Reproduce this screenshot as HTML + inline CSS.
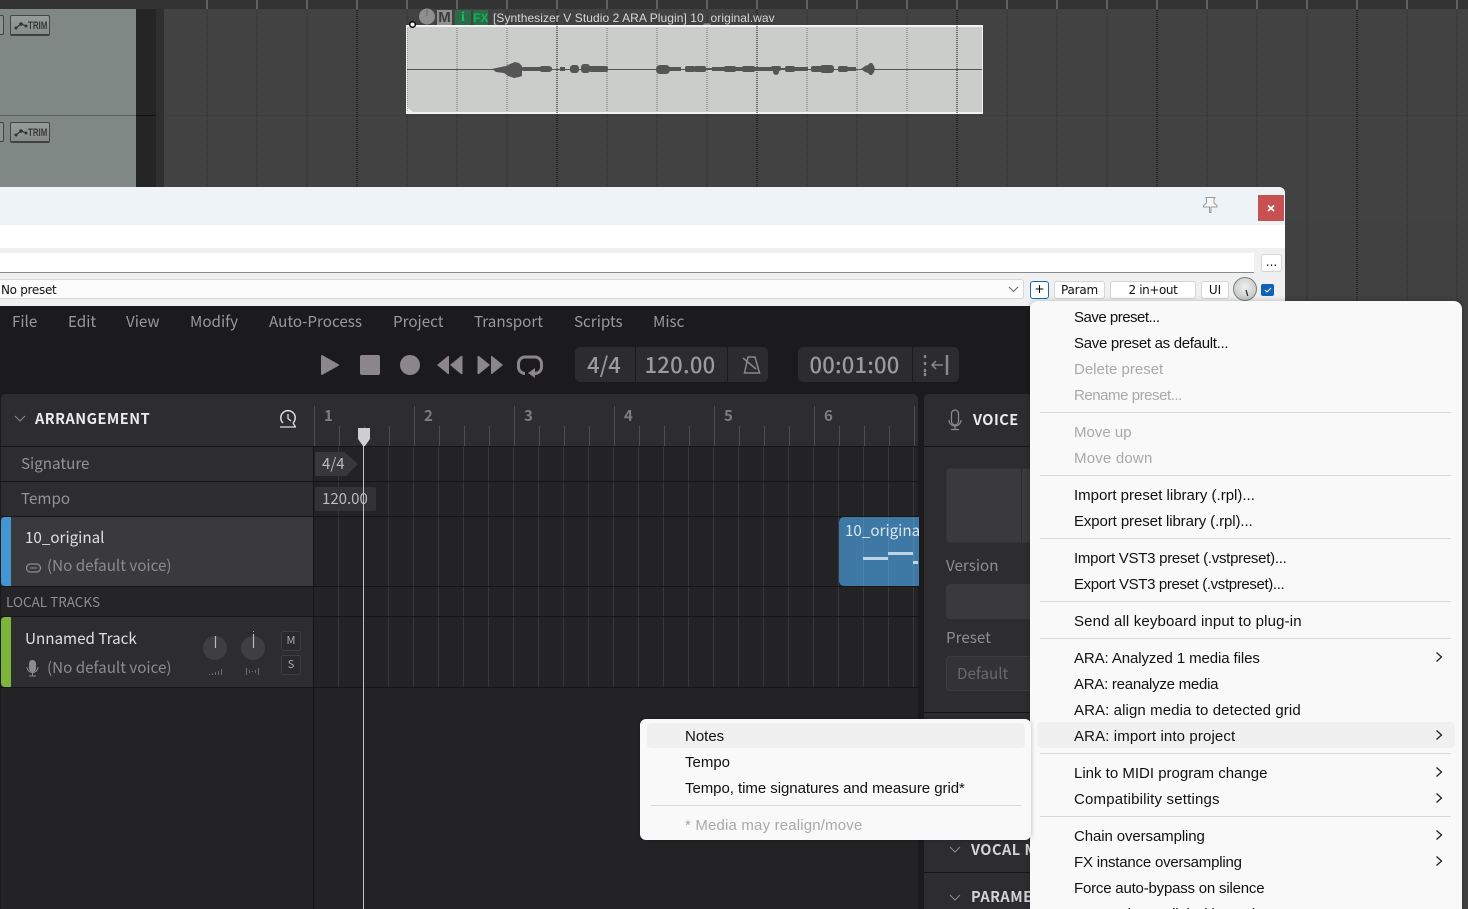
<!DOCTYPE html>
<html><head><meta charset="utf-8"><style>
html,body{margin:0;padding:0;width:1468px;height:909px;overflow:hidden;background:#424242}
div{position:absolute;box-sizing:border-box}
#root{left:0;top:0;width:1468px;height:909px;overflow:hidden;background:#424242}
.t{white-space:nowrap;line-height:20px;height:20px;font-family:"Noto Sans CJK JP","Liberation Sans",sans-serif}
.d{font-size:15.2px;color:#9a989c}
.m{font-family:"Liberation Sans","Noto Sans CJK JP",sans-serif;font-size:15px;color:#111;left:1074px}
.g{color:#a9a9a9}
.s{left:1040px;width:411px;height:1px;background:#d9d9d9}
.b{background:#fff;border:1px solid #d5d5d5;border-radius:3px;height:18px;font:12px/16px "DejaVu Sans",sans-serif;color:#111;text-align:center}
svg{position:absolute;left:0;top:0;overflow:visible}
.r{height:1px;background:#151517}
</style></head><body><div id="root">

<svg width="1468" height="909">
<defs>
<pattern id="dots" width="50" height="2" patternUnits="userSpaceOnUse" x="6.5"><rect x="0" y="0" width="1" height="1" fill="#2c2c2c"/></pattern>
<pattern id="dots3" width="50" height="2" patternUnits="userSpaceOnUse" x="6.5"><rect x="0" y="0" width="1" height="1" fill="#777"/></pattern>
<pattern id="dots2" width="200" height="2" patternUnits="userSpaceOnUse" x="156.5"><rect x="0" y="0" width="1" height="1" fill="#0c0c0c"/></pattern>
<pattern id="tk" width="50" height="9" patternUnits="userSpaceOnUse" x="6.5"><rect x="0" y="0" width="1" height="9" fill="#8f8f8f"/></pattern>
</defs>
<rect x="0" y="0" width="1468" height="9" fill="#333"/>
<rect x="164" y="0" width="1304" height="9" fill="url(#tk)"/>
<rect x="0" y="9" width="1468" height="300" fill="#424242"/>
<rect x="0" y="222" width="1468" height="90" fill="#414141"/>
<rect x="0" y="9" width="136" height="178" fill="#808886"/>
<rect x="136" y="9" width="20" height="178" fill="#252525"/>
<rect x="156" y="9" width="8" height="178" fill="#2f2f2f"/>
<rect x="0" y="115" width="136" height="1" fill="#585f5d"/>
<rect x="136" y="115" width="20" height="1" fill="#111"/>
<rect x="164" y="115" width="1304" height="1" fill="#3e3e3e"/>
<rect x="164" y="9" width="1304" height="300" fill="url(#dots)"/>
<rect x="406" y="25" width="577" height="89" fill="#cbcdcb"/>
<rect x="406" y="25" width="577" height="2" fill="#f2f2f2"/>
<rect x="406" y="112" width="577" height="2" fill="#f2f2f2"/>
<rect x="406" y="25" width="1" height="89" fill="#f2f2f2"/>
<rect x="982" y="25" width="1" height="89" fill="#f2f2f2"/>
<path d="M407 107l7 6h-7z" fill="#eee"/>
<rect x="407" y="27" width="575" height="85" fill="url(#dots3)"/>
<rect x="164" y="9" width="1304" height="300" fill="url(#dots2)"/>
<rect x="407" y="69" width="575" height="1" fill="#555"/>
<g fill="#555">
<path d="M492 69l4-1 10-2 4-2 5-2 4 1 3 3v10l-3 1-5 1-6-2-4-3-8-1z"/>
<rect x="522" y="67" width="30" height="4" rx="1"/><rect x="540" y="66" width="11" height="6" rx="2"/>
<rect x="560" y="67" width="5" height="4"/>
<rect x="570" y="65" width="9" height="8" rx="3"/><rect x="581" y="64" width="9" height="9" rx="3"/><rect x="589" y="66" width="19" height="6" rx="2"/>
<rect x="656" y="65" width="14" height="9" rx="4"/><rect x="668" y="67" width="13" height="4"/>
<rect x="685" y="66" width="10" height="6" rx="2"/><rect x="694" y="66" width="12" height="6" rx="2"/><rect x="705" y="68" width="8" height="2"/>
<rect x="712" y="67" width="14" height="4"/><rect x="724" y="66" width="12" height="6" rx="2"/><rect x="735" y="67" width="8" height="4"/>
<rect x="742" y="66" width="13" height="6" rx="2"/><rect x="754" y="67" width="18" height="4"/>
<rect x="771" y="66" width="10" height="5" rx="2"/><rect x="773" y="66" width="6" height="9" rx="3"/>
<rect x="781" y="68" width="5" height="2"/><rect x="785" y="66" width="10" height="6" rx="2"/><rect x="794" y="67" width="14" height="4"/>
<rect x="811" y="66" width="12" height="6" rx="2"/><rect x="820" y="65" width="14" height="8" rx="3"/>
<rect x="838" y="66" width="10" height="6" rx="2"/><rect x="847" y="67" width="9" height="4"/>
<path d="M861 69l4-3 3-1 2-2 2 0 2 3 1 3-1 3-2 3-2 0-2-2-3-1z"/>
</g>
<circle cx="412.500" cy="24.500" r="2.800" fill="#fff" stroke="#000" stroke-width="1.500"/>
<circle cx="427" cy="16.500" r="8" fill="#8e8e8e"/><rect x="426.500" y="10" width="1" height="6" fill="#6a6a6a"/>
<rect x="437" y="10" width="15" height="15" fill="#8f8f8f"/>
<rect x="455" y="10" width="16" height="15" fill="#2d6b48"/>
<rect x="473" y="10" width="15" height="15" fill="#2d6b48"/>
</svg>
<div class="t" style="left:437px;top:8px;width:15px;text-align:center;font:bold 15px/20px 'Liberation Sans';color:#3c3c3c">M</div>
<div class="t" style="left:455px;top:8px;width:16px;text-align:center;font:bold 14px/20px 'Liberation Serif';color:#17c060">i</div>
<div class="t" style="left:473px;top:8px;width:15px;text-align:center;font:bold 12px/20px 'Liberation Sans';color:#0fb45a">FX</div>
<div class="t" style="left:493px;top:8px;font:12px/20px 'Liberation Sans';color:#d8d8d8;letter-spacing:.07px">[Synthesizer V Studio 2 ARA Plugin] 10_original.wav</div>

<div style="left:-8px;top:15px;width:12px;height:20px;background:#8b9290;border:1px solid #444;border-radius:2px"></div>
<div style="left:10px;top:15px;width:40px;height:21px;background:linear-gradient(#969d9b,#858c8a);border:1px solid #444;border-bottom:2px solid #3f4241;border-radius:2px"></div>
<div class="t" style="left:28px;top:16px;font:bold 11px/20px 'Liberation Sans';color:#3a3a3a;transform:scaleX(.72);transform-origin:left">TRIM</div>
<div style="left:-8px;top:122px;width:12px;height:20px;background:#8b9290;border:1px solid #444;border-radius:2px"></div>
<div style="left:10px;top:122px;width:40px;height:21px;background:linear-gradient(#969d9b,#858c8a);border:1px solid #444;border-bottom:2px solid #3f4241;border-radius:2px"></div>
<div class="t" style="left:28px;top:123px;font:bold 11px/20px 'Liberation Sans';color:#3a3a3a;transform:scaleX(.72);transform-origin:left">TRIM</div>
<svg width="60" height="150"><path d="M16 28l5-4 5 2M16 135l5-4 5 2" fill="none" stroke="#333" stroke-width="1.200"/><circle cx="16" cy="28" r="1.500" fill="#333"/><circle cx="21" cy="24" r="1.800" fill="#333"/><circle cx="26" cy="26" r="1.500" fill="#333"/><circle cx="16" cy="135" r="1.500" fill="#333"/><circle cx="21" cy="131" r="1.800" fill="#333"/><circle cx="26" cy="133" r="1.500" fill="#333"/></svg>

<!-- plugin window -->
<div style="left:0;top:187px;width:1285px;height:125px;background:#f0f0f0;border-top-right-radius:6px;overflow:hidden">
  <div style="left:0;top:0;width:1285px;height:38px;background:#eef3f8"></div>
  <div style="left:0;top:38px;width:1285px;height:23px;background:#fff"></div>
  <div style="left:1258px;top:8px;width:26px;height:26px;background:#c75050"></div>
</div>
<svg width="1468" height="310"><path d="M1268 205.500l6 5.500m0-5.500l-6 5.500" stroke="#fff" stroke-width="1.700"/><path d="M1206 197.500h9l-1 1.500v4l3 2.500v1.500h-6v5.500h-1.500v-5.500h-6v-1.500l3-2.500v-4z" fill="#f6f6f6" stroke="#9a9a9a" stroke-width="1"/></svg>
<div style="left:0;top:253px;width:1254px;height:20px;background:#fff;border-bottom:1px solid #8a8a8a"></div>
<div class="b" style="left:1261px;top:254px;width:21px;height:18px;line-height:15px">...</div>
<div style="left:0;top:279px;width:1024px;height:20px;background:#fcfcfc;border:1px solid #d8d8d8;border-left:0;border-radius:0 3px 3px 0"></div>
<div class="t" style="left:1px;top:280px;font:12px/20px 'DejaVu Sans';color:#111;letter-spacing:-.3px">No preset</div>
<svg width="1468" height="310"><path d="M1009 287l4.500 4.500 4.500-4.500" fill="none" stroke="#666" stroke-width="1"/></svg>
<div class="b" style="left:1030px;top:281px;width:19px;border:1px solid #0f6cbd;color:#000;line-height:15px">+</div>
<div class="b" style="left:1054px;top:281px;width:51px;letter-spacing:-.2px">Param</div>
<div class="b" style="left:1110px;top:281px;width:86px;letter-spacing:-.4px">2 in+out</div>
<div class="b" style="left:1201px;top:281px;width:28px">UI</div>
<div style="left:1233px;top:277px;width:24px;height:24px;border-radius:50%;background:radial-gradient(circle at 50% 40%,#f0f2f0,#b6bab8);border:1px solid #7c7c7c"></div>
<svg width="1468" height="310"><path d="M1246 290l1.800 6" stroke="#222" stroke-width="1.200"/></svg>
<div style="left:1261px;top:284px;width:13px;height:12px;background:#0f62b8;border-radius:2px"></div>
<svg width="1468" height="310"><path d="M1265 290l2 2 4-4" stroke="#fff" fill="none" stroke-width="1"/></svg>

<!-- dark app -->
<div style="left:0;top:306px;width:1030px;height:603px;background:#1b1b1d"></div>
<div class="t d" style="left:12px;top:311px">File</div>
<div class="t d" style="left:68px;top:311px">Edit</div>
<div class="t d" style="left:126px;top:311px">View</div>
<div class="t d" style="left:190px;top:311px">Modify</div>
<div class="t d" style="left:269px;top:311px">Auto-Process</div>
<div class="t d" style="left:393px;top:311px">Project</div>
<div class="t d" style="left:474px;top:311px">Transport</div>
<div class="t d" style="left:574px;top:311px">Scripts</div>
<div class="t d" style="left:653px;top:311px">Misc</div>

<svg width="1030" height="400">
<g fill="#8a868c">
<path d="M321 356q0-1.500 1.500-.8l16 9q1.200.8 0 1.600l-16 9q-1.500.7-1.500-.8z"/>
<rect x="360" y="355" width="20" height="20" rx="2"/>
<circle cx="410" cy="365" r="10"/>
<path d="M437 365l11-9q1-.5 1 .5v17q0 1-1 .5zM450 365l11-9q1.500-.5 1.500.5v17q0 1-1.500.5z"/>
<path d="M503 365l-11-9q-1-.5-1 .5v17q0 1 1 .5zM490 365l-11-9q-1.500-.5-1.500.5v17q0 1 1.500.5z"/>
</g>
<path d="M534 373.500h1a6.500 6.500 0 0 0 6.500-6.500v-3.500a6.500 6.500 0 0 0-6.500-6.500h-10a6.500 6.500 0 0 0-6.500 6.500v3.500a6.500 6.500 0 0 0 6.500 6.500" fill="none" stroke="#8a868c" stroke-width="3"/>
<path d="M535 368v10l-7-5z" fill="#8a868c"/>
</svg>
<div style="left:575px;top:347px;width:193px;height:35px;background:#2c2b2e;border-radius:5px"></div>
<div style="left:635px;top:347px;width:1px;height:35px;background:#1b1b1d"></div>
<div style="left:727px;top:347px;width:1px;height:35px;background:#1b1b1d"></div>
<div style="left:798px;top:347px;width:161px;height:35px;background:#2c2b2e;border-radius:5px"></div>
<div style="left:912px;top:347px;width:1px;height:35px;background:#1b1b1d"></div>
<div class="t" style="left:576px;top:354px;width:56px;text-align:center;font-size:22px;font-weight:500;color:#9c9a9e">4/4</div>
<div class="t" style="left:636px;top:354px;width:88px;text-align:center;font-size:22px;font-weight:500;color:#9c9a9e;letter-spacing:.3px">120.00</div>
<div class="t" style="left:798px;top:354px;width:113px;text-align:center;font-size:22px;font-weight:500;color:#9c9a9e;letter-spacing:.2px">00:01:00</div>
<svg width="1030" height="400" fill="none" stroke="#8a868c">
<path d="M748 357h7l4.500 16h-15zM743 358l13 11" stroke-width="1.500"/>
<path d="M925 356v1m0 6v1m0 6v1m0 3v1" stroke-width="2.500" stroke-linecap="round"/>
<path d="M943 365h-11m4-4l-4 4 4 4" stroke-width="1.500"/>
<path d="M947 355v20" stroke-width="2.500"/>
</svg>

<!-- arrangement -->
<div style="left:1px;top:394px;width:917px;height:515px;background:#232325;border-radius:5px 5px 0 0;overflow:hidden">
  <div style="left:0;top:0;width:917px;height:52px;background:#2d2c2f"></div>
  <div style="left:0;top:53px;width:312px;height:34px;background:#2d2c2f"></div>
  <div style="left:0;top:88px;width:312px;height:34px;background:#2d2c2f"></div>
  <div style="left:0;top:123px;width:312px;height:69px;background:#3a393d"></div>
  <div style="left:0;top:193px;width:312px;height:29px;background:#252427"></div>
  <div style="left:0;top:223px;width:312px;height:70px;background:#2d2c2f"></div>
  <div style="left:0;top:294px;width:312px;height:221px;background:#232325"></div>
</div>
<div style="left:313px;top:446px;width:1px;height:463px;background:#141416"></div>
<svg width="1030" height="909">
<g stroke="#38383a" stroke-width="1">
<path d="M338.500 447V687M363.500 447V687M388.500 447V687M413.500 447V687M438.500 447V687M463.500 447V687M488.500 447V687M513.500 447V687M538.500 447V687M563.500 447V687M588.500 447V687M613.500 447V687M638.500 447V687M663.500 447V687M688.500 447V687M713.500 447V687M738.500 447V687M763.500 447V687M788.500 447V687M813.500 447V687M838.500 447V687M863.500 447V687M888.500 447V687M913.500 447V687"/>
</g>
<g stroke="#4d4c50" stroke-width="1">
<path d="M314.500 406V446M414.500 406V446M514.500 406V446M614.500 406V446M714.500 406V446M814.500 406V446M914.500 406V446"/>
<path d="M339.500 426V446M364.500 426V446M389.500 426V446M439.500 426V446M464.500 426V446M489.500 426V446M539.500 426V446M564.500 426V446M589.500 426V446M639.500 426V446M664.500 426V446M689.500 426V446M739.500 426V446M764.500 426V446M789.500 426V446M839.500 426V446M864.500 426V446M889.500 426V446"/>
</g>
</svg>
<div class="r" style="left:0;top:446px;width:918px"></div>
<div class="r" style="left:0;top:481px;width:918px"></div>
<div class="r" style="left:0;top:516px;width:918px"></div>
<div class="r" style="left:0;top:586px;width:918px"></div>
<div class="r" style="left:0;top:616px;width:918px"></div>
<div class="r" style="left:0;top:687px;width:918px"></div>

<div class="t" style="left:324px;top:406px;font-size:15px;font-weight:700;color:#7f7d82">1</div>
<div class="t" style="left:424px;top:406px;font-size:15px;font-weight:700;color:#7f7d82">2</div>
<div class="t" style="left:524px;top:406px;font-size:15px;font-weight:700;color:#7f7d82">3</div>
<div class="t" style="left:624px;top:406px;font-size:15px;font-weight:700;color:#7f7d82">4</div>
<div class="t" style="left:724px;top:406px;font-size:15px;font-weight:700;color:#7f7d82">5</div>
<div class="t" style="left:824px;top:406px;font-size:15px;font-weight:700;color:#7f7d82">6</div>

<svg width="1030" height="909" fill="none">
<path d="M15 416l5 5 5-5" stroke="#8d8b90" stroke-width="1"/>
<path d="M283 423a7.200 7.200 0 1 1 10 0" stroke="#ddd" stroke-width="1.500"/>
<path d="M288 414v4.500l3 2.500M280 427h16M293 423l2.500 4" stroke="#ddd" stroke-width="1.300"/>
<path d="M315 452h29l14 12-12 12h-31z" fill="#38373a"/>
<rect x="315" y="487" width="61" height="24" rx="2" fill="#333235"/>
</svg>
<div class="t" style="left:35px;top:409px;font-size:14.500px;font-weight:700;color:#eceaee;letter-spacing:.5px">ARRANGEMENT</div>
<div class="t" style="left:21px;top:453px;color:#959398;font-size:15.200px">Signature</div>
<div class="t" style="left:21px;top:488px;color:#959398;font-size:15.200px">Tempo</div>
<div class="t" style="left:322px;top:454px;color:#bdbbc0;font-size:15px">4/4</div>
<div class="t" style="left:322px;top:489px;color:#bdbbc0;font-size:15px">120.00</div>

<div style="left:1px;top:517px;width:10px;height:69px;background:#4396d2;border-radius:4px 0 0 4px"></div>
<div style="left:1px;top:617px;width:10px;height:70px;background:#7cb53a;border-radius:4px 0 0 4px"></div>
<div class="t" style="left:25px;top:527px;color:#e0dee2;font-size:15.200px">10_original</div>
<div class="t" style="left:47px;top:555px;color:#8d8b90;font-size:15.200px">(No default voice)</div>
<div class="t" style="left:6px;top:591px;color:#8f8d91;font-size:13.500px">LOCAL TRACKS</div>
<div class="t" style="left:25px;top:628px;color:#e0dee2;font-size:15.200px">Unnamed Track</div>
<div class="t" style="left:47px;top:657px;color:#8d8b90;font-size:15.200px">(No default voice)</div>

<svg width="1030" height="909" fill="none">
<rect x="26.500" y="564" width="14" height="8" rx="4" stroke="#8d8b90" stroke-width="1.300"/><path d="M30 568h7" stroke="#8d8b90"/>
<rect x="29" y="660" width="7" height="12" rx="3.500" fill="#8d8b90"/><path d="M27 667a5.500 5.500 0 0 0 11 0M32.500 673v3M29 676h7" stroke="#8d8b90"/>
<circle cx="215" cy="648" r="12" fill="#3f3e42"/><circle cx="253" cy="648" r="12" fill="#3f3e42"/>
<path d="M215.500 636v12M253.500 634v14" stroke="#bdbbc0" stroke-width="1.200"/>
<path d="M253.500 631v1" stroke="#bdbbc0"/>
<path d="M209.500 674v1M212.500 673v2M215.500 672v3M218.500 671v4M221.500 669v6" stroke="#6f6d72"/>
<path d="M246.500 668v7M249.500 670v3M252.500 671v1M255.500 670v3M258.500 668v7" stroke="#6f6d72"/>
<rect x="281.500" y="631.500" width="19" height="19" rx="2" fill="#2a292c" stroke="#3e3d41"/>
<rect x="281.500" y="655.500" width="19" height="19" rx="2" fill="#2a292c" stroke="#3e3d41"/>
</svg>
<div class="t" style="left:281px;top:630px;width:20px;text-align:center;font-size:11px;color:#aaa8ad">M</div>
<div class="t" style="left:281px;top:654px;width:20px;text-align:center;font-size:11px;color:#aaa8ad">S</div>

<!-- clip -->
<div style="left:839px;top:517px;width:80px;height:69px;background:#3e79a6;border-radius:5px 0 0 5px;overflow:hidden">
 <div style="left:24px;top:0;width:1px;height:69px;background:#4b84ae"></div>
 <div style="left:49px;top:0;width:1px;height:69px;background:#4b84ae"></div>
 <div style="left:74px;top:0;width:1px;height:69px;background:#4b84ae"></div>
 <div class="t" style="left:6px;top:3px;color:#dbe6ef;font-size:15.200px">10_original</div>
 <div style="left:24px;top:40px;width:25px;height:3px;background:#bcd4e6"></div>
 <div style="left:49px;top:35px;width:25px;height:3px;background:#bcd4e6"></div>
 <div style="left:74px;top:44px;width:5px;height:3px;background:#bcd4e6"></div>
</div>
<div style="left:919px;top:394px;width:5px;height:515px;background:#1b1b1d"></div>
<svg width="1030" height="909"><path d="M363.500 440V909" stroke="#c4c4c4" stroke-width="1"/><path d="M358 428h12v11l-5 7h-2l-5-7z" fill="#cfcfcf"/></svg>

<!-- voice panel -->
<div style="left:924px;top:394px;width:140px;height:515px;background:#2d2c2f;border-radius:5px 0 0 0"></div>
<div class="r" style="left:924px;top:446px;width:110px"></div>
<svg width="1030" height="909" fill="none" stroke="#8d8b90">
<rect x="951.500" y="410" width="7" height="15" rx="3.500" stroke-width="1.200"/>
<path d="M949 420a6 6 0 0 0 12 0M955 426v3M951 429.500h8" stroke-width="1.200"/>
<path d="M950 847l5 5 5-5M950 895l5 5 5-5" stroke-width="1"/>
</svg>
<div class="t" style="left:973px;top:410px;color:#eceaee;font-size:14.500px;font-weight:700;letter-spacing:.5px">VOICE</div>
<div style="left:946px;top:468px;width:100px;height:75px;background:#3a393c;border-radius:4px;border:1px solid #343336"></div>
<div style="left:1021px;top:468px;width:1px;height:75px;background:#2b2a2d"></div>
<div class="t" style="left:946px;top:555px;color:#8f8d92;font-size:15.200px">Version</div>
<div style="left:946px;top:584px;width:100px;height:35px;background:#3a393c;border-radius:4px"></div>
<div class="t" style="left:946px;top:627px;color:#8f8d92;font-size:15.200px">Preset</div>
<div style="left:946px;top:656px;width:100px;height:35px;background:#333235;border-radius:4px;border:1px solid #3c3b3e"></div>
<div class="t" style="left:957px;top:663px;color:#6b696e;font-size:15.200px">Default</div>
<div class="r" style="left:924px;top:712px;width:110px"></div>
<div class="r" style="left:924px;top:872px;width:110px"></div>
<div class="t" style="left:971px;top:840px;color:#d5d3d7;font-size:14.500px;font-weight:700;letter-spacing:.5px">VOCAL MODE</div>
<div class="t" style="left:971px;top:887px;color:#d5d3d7;font-size:14.500px;font-weight:700;letter-spacing:.5px">PARAMETERS</div>

<!-- main context menu -->
<div style="left:1030px;top:301px;width:432px;height:620px;background:#f9f9f9;border-radius:8px;box-shadow:0 0 6px rgba(0,0,0,.25)"></div>
<div style="left:1037px;top:722px;width:418px;height:26px;background:#f0f0f0;border-radius:4px"></div>
<div class="t m" style="top:308px;letter-spacing:-.5px">Save preset...</div>
<div class="t m" style="top:334px;letter-spacing:-.3px">Save preset as default...</div>
<div class="t m g" style="top:360px">Delete preset</div>
<div class="t m g" style="top:386px;letter-spacing:-.45px">Rename preset...</div>
<div class="s" style="top:412px"></div>
<div class="t m g" style="top:423px">Move up</div>
<div class="t m g" style="top:449px;letter-spacing:.2px">Move down</div>
<div class="s" style="top:475px"></div>
<div class="t m" style="top:486px">Import preset library (.rpl)...</div>
<div class="t m" style="top:512px;letter-spacing:-.1px">Export preset library (.rpl)...</div>
<div class="s" style="top:538px"></div>
<div class="t m" style="top:549px;letter-spacing:-.27px">Import VST3 preset (.vstpreset)...</div>
<div class="t m" style="top:575px;letter-spacing:-.36px">Export VST3 preset (.vstpreset)...</div>
<div class="s" style="top:601px"></div>
<div class="t m" style="top:612px;letter-spacing:.15px">Send all keyboard input to plug-in</div>
<div class="s" style="top:638px"></div>
<div class="t m" style="top:649px;letter-spacing:-.1px">ARA: Analyzed 1 media files</div>
<div class="t m" style="top:675px;letter-spacing:-.25px">ARA: reanalyze media</div>
<div class="t m" style="top:701px;letter-spacing:.1px">ARA: align media to detected grid</div>
<div class="t m" style="top:727px;letter-spacing:.12px">ARA: import into project</div>
<div class="s" style="top:753px"></div>
<div class="t m" style="top:764px">Link to MIDI program change</div>
<div class="t m" style="top:790px;letter-spacing:.18px">Compatibility settings</div>
<div class="s" style="top:816px"></div>
<div class="t m" style="top:827px;letter-spacing:-.1px">Chain oversampling</div>
<div class="t m" style="top:853px;letter-spacing:-.2px">FX instance oversampling</div>
<div class="t m" style="top:879px;letter-spacing:-.2px">Force auto-bypass on silence</div>
<div class="t m" style="top:905px;letter-spacing:-.2px">Run FX in parallel with previous FX</div>
<svg width="1468" height="909" fill="none" stroke="#222" stroke-width="1.300"><path d="M1436.500 652.500l5 4.500-5 4.500M1436.500 730.500l5 4.500-5 4.500M1436.500 767.500l5 4.500-5 4.500M1436.500 793.500l5 4.500-5 4.500M1436.500 830.500l5 4.500-5 4.500M1436.500 856.500l5 4.500-5 4.500"/></svg>

<!-- sub menu -->
<div style="left:640px;top:719px;width:391px;height:121px;background:#f9f9f9;border-radius:6px;box-shadow:0 0 5px rgba(0,0,0,.25)"></div>
<div style="left:647px;top:723px;width:378px;height:25px;background:#f0f0f0;border-radius:4px"></div>
<div class="t m" style="left:685px;top:727px">Notes</div>
<div class="t m" style="left:685px;top:753px">Tempo</div>
<div class="t m" style="left:685px;top:779px;letter-spacing:-.05px">Tempo, time signatures and measure grid*</div>
<div style="left:651px;top:805px;width:370px;height:1px;background:#d9d9d9"></div>
<div class="t m g" style="left:685px;top:816px;letter-spacing:.17px">* Media may realign/move</div>
</div></body></html>
